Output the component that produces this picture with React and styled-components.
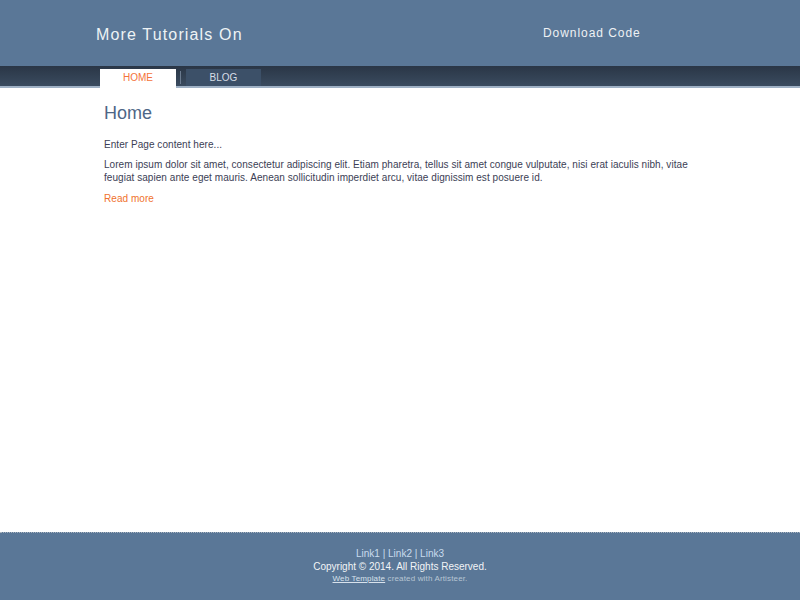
import React from "react";
import styled, { createGlobalStyle } from "styled-components";

const Global = createGlobalStyle`
  html, body { margin: 0; padding: 0; }
  body { font-family: "Liberation Sans", Arial, sans-serif; background: #fff; }
`;

const Page = styled.div`
  display: flex;
  flex-direction: column;
  min-height: 100vh;
`;

const Header = styled.header`
  height: 66px;
  background: #5a7797;
  display: flex;
  align-items: center;
  box-sizing: border-box;
`;

const Title = styled.h1`
  margin: 0 0 0 96px;
  padding-top: 3px;
  font-size: 16px;
  letter-spacing: 1.15px;
  font-weight: normal;
  color: #eef3f5;
  width: 447px;
`;

const Download = styled.a`
  font-size: 12px;
  letter-spacing: 0.95px;
  color: #eef1f4;
  text-decoration: none;
`;

const Nav = styled.nav`
  height: 20px;
  background: linear-gradient(#2a3646, #3a4b5f);
  border-bottom: 2px solid #9fb1c5;
  display: flex;
  align-items: flex-end;
  padding-left: 100px;
`;

const Tab = styled.a`
  width: ${p => p.$w}px;
  height: ${p => (p.$active ? 19 : 17)}px;
  margin-bottom: ${p => (p.$active ? -2 : 0)}px;
  background: ${p => (p.$active ? "#ffffff" : "#3c5068")};
  color: ${p => (p.$active ? "#f4733a" : "#d6dde6")};
  font-size: 10px;
  display: flex;
  align-items: center;
  justify-content: center;
  padding-bottom: ${p => (p.$active ? 2 : 0)}px;
  box-sizing: border-box;
  text-decoration: none;
`;

const Sep = styled.span`
  width: 1px;
  height: 13px;
  margin: 0 5px 2px 4px;
  background: #6b7b8f;
`;

const Content = styled.main`
  flex: 1;
  padding: 15px 96px 0 104px;
  color: #3b3e55;
  font-size: 10px;
  letter-spacing: 0.05px;
  line-height: 13px;
`;

const Heading = styled.h2`
  margin: 0 0 15px;
  font-size: 18px;
  letter-spacing: 0;
  font-weight: normal;
  color: #4e6686;
  line-height: 20px;
`;

const Para = styled.p`
  margin: 0 0 ${p => p.$mb || 8}px;
  max-width: 600px;
`;

const More = styled.a`
  color: #f0722e;
  text-decoration: none;
`;

const Footer = styled.footer`
  height: 68px;
  background: #5a7797;
  border-top: 1px dotted #aab4be;
  display: flex;
  flex-direction: column;
  align-items: center;
  padding-top: 14px;
  box-sizing: border-box;
  font-size: 10px;
  line-height: 13px;
`;

const Links = styled.div`
  color: #c9dcee;
`;

const FLink = styled.a`
  color: #c9dcee;
  text-decoration: none;
`;

const Copy = styled.div`
  color: #f2f4f6;
`;

const Small = styled.div`
  color: #b8c6d4;
  font-size: 8px;
  letter-spacing: 0.15px;
  line-height: 11px;
  a { color: #d8e2ec; text-decoration: underline; }
`;

export default function App() {
  return (
    <Page>
      <Global />
      <Header>
        <Title>More Tutorials On</Title>
        <Download href="#">Download Code</Download>
      </Header>
      <Nav>
        <Tab $active $w={76} href="#">HOME</Tab>
        <Sep />
        <Tab $w={75} href="#">BLOG</Tab>
      </Nav>
      <Content>
        <Heading>Home</Heading>
        <Para $mb={7}>Enter Page content here...</Para>
        <Para $mb={8}>
          Lorem ipsum dolor sit amet, consectetur adipiscing elit. Etiam pharetra, tellus sit amet congue vulputate, nisi erat iaculis nibh, vitae feugiat sapien ante eget mauris. Aenean sollicitudin imperdiet arcu, vitae dignissim est posuere id.
        </Para>
        <Para><More href="#">Read more</More></Para>
      </Content>
      <Footer>
        <Links>
          <FLink href="#">Link1</FLink> | <FLink href="#">Link2</FLink> | <FLink href="#">Link3</FLink>
        </Links>
        <Copy>Copyright © 2014. All Rights Reserved.</Copy>
        <Small><a href="#">Web Template</a> created with Artisteer.</Small>
      </Footer>
    </Page>
  );
}
